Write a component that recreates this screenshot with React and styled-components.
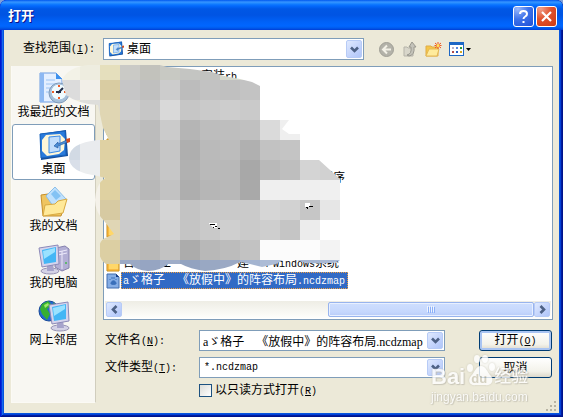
import React from "react";
import styled, { createGlobalStyle } from "styled-components";

const GlobalStyle = createGlobalStyle`
  * { box-sizing: border-box; }
  body { margin: 0; background: #7f9fd8; }
  body, button, input, select {
    font-family: "Liberation Serif", "Noto Sans CJK SC", sans-serif;
    font-size: 12px;
    line-height: 16px;
    text-spacing-trim: space-all;
    color: #000;
  }
  button { padding: 0; cursor: default; }
  svg { display: block; flex: none; }
`;

const Dialog = styled.main`
  position: relative;
  display: flex;
  flex-direction: column;
  min-height: 100vh;
  padding: 0 4px 4px;
  border-radius: 7px 7px 0 0;
  background: #0855dd;
  box-shadow: inset 1px 0 #0019cf, inset -1px 0 #00138c, inset 0 -1px #00138c,
    inset 2px 0 #0831d9, inset -2px -2px #001da0, inset 3px 0 #166aee, inset -3px -3px #0441d8;
  overflow: hidden;
`;

const TitleBar = styled.header`
  display: flex;
  align-items: center;
  gap: 2px;
  height: 30px;
  margin: 0 -4px;
  padding: 2px 6px 0 8px;
  background: linear-gradient(#0058ee 0, #3593ff 2px, #288eff 3px, #127dff 4px, #0369fc 6px, #0057e5 9px, #0054e3 15px, #0062f8 22px, #0066ff 26px, #005bec 28px, #003dd7 30px);
`;

const Title = styled.h1`
  flex: 1;
  margin: 0;
  font-size: 13px;
  line-height: 18px;
  font-weight: 700;
  color: #fff;
  text-shadow: 1px 1px #0f1089;
`;

const CaptionButton = styled.button`
  display: grid;
  place-items: center;
  width: 21px;
  height: 21px;
  border: 1px solid #fff;
  border-radius: 3px;
  background: ${(p) =>
    p.$close
      ? "radial-gradient(circle at 20% 10%, #f0a08a, #e0512c 45%, #cc3a12)"
      : "radial-gradient(circle at 20% 10%, #9ab8fb, #3f73ea 45%, #1c4fd6)"};
`;

const Body = styled.div`
  flex: 1;
  display: flex;
  flex-direction: column;
  gap: 6px;
  padding: 8px 6px 10px 7px;
  background: #ece9d8;
`;

const LookRow = styled.div`
  display: flex;
  align-items: center;
`;

const Label = styled.label`
  width: ${(p) => p.$width}px;
  padding-left: ${(p) => p.$indent || 0}px;
  white-space: nowrap;
`;

const Half = styled.span`
  font-family: "Liberation Mono", monospace;
  font-size: 10px;
`;

const Combo = styled.div`
  display: flex;
  align-items: center;
  width: ${(p) => p.$width};
  height: ${(p) => p.$height}px;
  padding: 1px;
  border: 1px solid #7f9db9;
  background: #fff;
`;

const Select = styled.select`
  flex: 1;
  min-width: 0;
  height: 18px;
  padding: 0 3px;
  border: 0;
  outline: 0;
  appearance: none;
  background: transparent;
  ${(p) => p.$mono && `font-family: "Liberation Mono", monospace; font-size: 10px;`}
`;

const TextInput = styled.input`
  flex: 1;
  min-width: 0;
  height: 18px;
  padding: 0 2px;
  border: 0;
  outline: 0;
  background: transparent;
`;

const ArrowButton = styled.button`
  display: grid;
  place-items: center;
  width: 16px;
  height: ${(p) => (p.$square ? "15px" : "100%")};
  border: 1px solid #b7cbf6;
  border-radius: 2px;
  background: linear-gradient(135deg, #dfe9fe, #bdcffb 70%, #b0c6f8);
`;

const Tools = styled.div`
  display: flex;
  align-items: center;
  gap: 7px;
  margin-left: 14px;
`;

const ToolButton = styled.button`
  display: flex;
  align-items: center;
  gap: 1px;
  border: 0;
  background: none;
`;

const Content = styled.div`
  flex: 1;
  display: flex;
  gap: 7px;
`;

const Places = styled.nav`
  display: flex;
  flex-direction: column;
  gap: 1px;
  width: 85px;
  padding: 1px 0;
  border: 1px solid #fbfaf5;
  border-top: 0;
  border-right-color: #d0cdbd;
  background: #f8f7f2;
`;

const Place = styled.button`
  display: flex;
  flex-direction: column;
  align-items: center;
  height: 56px;
  padding-top: 4px;
  border: 1px solid ${(p) => (p.$active ? "#7f9db9" : "transparent")};
  border-radius: 3px;
  background: ${(p) => (p.$active ? "#fff" : "transparent")};
  white-space: nowrap;
`;

const Right = styled.div`
  flex: 1;
  min-width: 0;
  display: flex;
  flex-direction: column;
  gap: 10px;
`;

const FileBox = styled.section`
  flex: 1;
  display: flex;
  flex-direction: column;
  padding: 1px;
  border: 1px solid #7f9db9;
  background: #fff;
`;

const FileList = styled.ul`
  flex: 1;
  margin: 0;
  padding: 0;
  list-style: none;
`;

const FileItem = styled.li`
  display: flex;
  align-items: center;
  height: 17px;
  padding-left: 1px;
  gap: 1px;
`;

const FileName = styled.button`
  height: 17px;
  padding: 0 2px 0 1px;
  border: 1px ${(p) => (p.$selected ? "dotted #f0a040" : "solid transparent")};
  background: ${(p) => (p.$selected ? "#316ac5" : "transparent")};
  color: ${(p) => (p.$selected ? "#fff" : "#000")};
  line-height: 15px;
  white-space: pre;
`;

const ScrollBar = styled.div`
  display: flex;
  align-items: center;
  height: 17px;
  padding: 0 1px;
  background: linear-gradient(#eeede5, #fefefb);
`;

const Track = styled.div`
  flex: 1;
  display: flex;
  justify-content: flex-end;
  height: 15px;
`;

const Thumb = styled.div`
  display: grid;
  place-items: center;
  width: 50%;
  border: 1px solid #98b4ee;
  border-radius: 2px;
  box-shadow: inset 0 0 0 1px #e8f0ff;
  background: linear-gradient(#cfdffe, #c5d7fd 70%, #b7cbf8);
`;

const Form = styled.form`
  display: grid;
  grid-template-columns: 96px 246px 1fr;
  row-gap: 6px;
  align-items: center;
  padding: 0 1px 6px 0;
`;

const PushButton = styled.button`
  justify-self: end;
  width: 73px;
  height: 21px;
  border: 1px solid #003c74;
  border-radius: 3px;
  background: linear-gradient(#fff, #f3f2ea 70%, #dcd8cb);
  box-shadow: ${(p) => (p.$primary ? "inset 0 0 0 2px #a9c4f2" : "none")};
`;

const CheckLabel = styled.label`
  grid-column: 2;
  display: flex;
  align-items: center;
  gap: 3px;
  height: 13px;
`;

const CheckBox = styled.input`
  appearance: none;
  width: 13px;
  height: 13px;
  margin: 0;
  border: 1px solid #1c5180;
  background: linear-gradient(135deg, #dcdcd7, #fff);
`;

const Overlay = styled.svg`
  position: absolute;
  left: 0;
  top: 0;
  pointer-events: none;
`;

const Grip = styled.svg`
  position: absolute;
  right: 6px;
  bottom: 5px;
`;

const Watermark = styled.div`
  position: absolute;
  right: 28px;
  bottom: 13px;
  width: 104px;
  opacity: 0.8;
  color: #fff;
  pointer-events: none;
  text-shadow: 0 0 2px #b5b2a5, 1px 1px 1px #c5c2b5;
`;

const Brand = styled.div`
  display: flex;
  align-items: flex-end;
  font: 700 22px/22px "Liberation Sans", "Noto Sans CJK SC", sans-serif;
`;

const BrandInner = styled.span`
  position: relative;
  width: 28px;
  color: #d0ccbc;
  font-size: 13px;
  line-height: 19px;
  text-align: center;
  text-shadow: none;
`;

const BrandCn = styled.span`
  margin-left: 1px;
  font-size: 17px;
  line-height: 22px;
  font-weight: 500;
`;

const Site = styled.div`
  margin-top: 2px;
  font: 12px/14px "Liberation Sans", sans-serif;
`;

const Paw = styled.svg`
  position: absolute;
  left: 35px;
  top: -12px;
  filter: drop-shadow(0 0 1px #c5c2b5);
`;

const Access = ({ letter, colon = true }) => (
  <Half>(<u>{letter}</u>){colon ? ":" : ""}</Half>
);

const Chevron = ({ rotate = 0 }) => (
  <svg width="9" height="9" viewBox="0 0 9 9">
    <path d="M1 2.5 4.5 6 8 2.5" transform={`rotate(${rotate} 4.5 4.5)`} fill="none" stroke="#4d6185" strokeWidth="2.6" />
  </svg>
);

const DesktopIcon = ({ size }) => (
  <svg width={size} height={size} viewBox="0 0 32 32">
    <path d="M2 5 28 1 30 27 3 31Z" fill="#174f9c" />
    <path d="M2 5 27 2 28 26 3 29Z" fill="#2a7bdc" stroke="#1863bd" />
    <path d="M8 6 22 5 27 10 26 21 21 25 9 27 4 22 4 11Z" fill="#fff7d8" />
    <path d="M11 8 22 7 22 22 11 24Z" fill="#c2defc" stroke="#3d8ce8" />
    <path d="M16 17 20 13 20 15 29 11 30 13 20 17 20 19Z" fill="#4b8ed5" stroke="#1c529c" strokeWidth=".6" />
    <path d="M28 10 32 9 32 13 29 14Z" fill="#d34a1d" />
  </svg>
);

const RecentIcon = () => (
  <svg width="32" height="32" viewBox="0 0 32 32">
    <path d="M2 1h16l6 6v23H2Z" fill="#e4efff" stroke="#6d9ce2" />
    <path d="M2 1h4v29H2Z" fill="#8db8f2" />
    <path d="M18 1v6h6" fill="#3d91ee" />
    <path d="M8 8h9M8 12h13M8 16h13M8 20h8" stroke="#9cc4f4" />
    <circle cx="21" cy="21" r="10" fill="#a5bfd9" stroke="#7f9ab9" />
    <circle cx="21" cy="20" r="8" fill="#f0fbff" stroke="#a5c2de" />
    <path d="M20 21 25 16M18 20h5" stroke="#222e48" strokeWidth="2" />
    <path d="M21 13v2M21 25v2M14 20h2M26 20h2" stroke="#ef5c24" strokeWidth="2" />
  </svg>
);

const DocumentsIcon = () => (
  <svg width="32" height="32" viewBox="0 0 32 32">
    <path d="M3 9 10 8 12 11 28 14 23 30 5 30Z" fill="#efc561" stroke="#c58f2d" />
    <path d="M8 10 17 1 28 13 18 24Z" fill="#c0e1fd" stroke="#8bbfe9" />
    <path d="M13 8 17 4 23 10 18 14Z" fill="#83c2f4" />
    <path d="M5 30 7 19 17 18 20 15 29 13 25 27Z" fill="#ffe999" stroke="#d9aa42" />
  </svg>
);

const Screen = ({ x, y }) => (
  <g transform={`translate(${x} ${y})`}>
    <ellipse cx="11" cy="26" rx="9" ry="3" fill="#d4d2e6" stroke="#9793b5" />
    <path d="M8 19 14 18 15 26 8 26Z" fill="#a6a3cb" />
    <path d="M0 3 19 0 20 19 3 22Z" fill="#d5d4ed" stroke="#8d8ab8" />
    <path d="M3 5 17 2 17 17 5 19Z" fill="#44b6f5" />
    <path d="M4 6 16 3 16 7 5 14Z" fill="#9be2ff" />
  </g>
);

const ComputerIcon = () => (
  <svg width="32" height="32" viewBox="0 0 32 32">
    <path d="M18 5 27 3 31 6 31 25 24 28 17 24Z" fill="#b3afd5" stroke="#8580ad" />
    <path d="M24 8v18M20 9l9-2M20 12l9-2" stroke="#ece9fa" />
    <circle cx="28" cy="20" r="1" fill="#45ba4c" />
    <Screen x={1} y={2} />
  </svg>
);

const NetworkIcon = () => (
  <svg width="32" height="32" viewBox="0 0 32 32">
    <circle cx="11" cy="11" r="10" fill="#2269d2" stroke="#164899" />
    <path d="M4 4 10 1 14 5 9 9 12 14 9 20 4 14 2 9ZM15 2 20 7 17 9Z" fill="#36af32" />
    <path d="M6 5 10 3 11 5 7 8Z" fill="#9fec65" />
    <Screen x={11} y={2} />
  </svg>
);

const FileGlyph = ({ kind }) =>
  kind === "map" ? (
    <svg width="14" height="16" viewBox="0 0 14 16">
      <path d="M1 1h9l3 3v11H1Z" fill="#85ade5" stroke="#416dae" />
      <path d="M10 1v3h3" fill="#173b84" />
      <path d="M4 6v1M6 4v2M8 4v2M10 6v1M5 10c1-3 4-3 5 0 1 2-6 2-5 0" fill="#396fba" stroke="#396fba" />
    </svg>
  ) : (
    <svg width="14" height="16" viewBox="0 0 14 16">
      <path d="M1 2h5l2 2h5v11H1Z" fill="#ffd768" stroke="#c58a16" />
      <path d="M2 3v11h11" fill="none" stroke="#ef9f23" />
    </svg>
  );

const cellRows = [
  [60, ["#f3f2e7", "#eeede0", "#e5dfbd", "#cacac6", "#c2c2bc", "#c8c9c3", "#c4c5c2", "#c2c3c0", "#d5d8cc", "#d5d8cc"]],
  [80, ["#dcdcdc", "#f2efe8", "#d9cca2", "#c6c6c7", "#c0c0bf", "#cccccc", "#bcbcbc", "#c2c2c2", "#c0c0c0", "#c3c3c3"]],
  [100, ["#ece9d8", "#dededb", "#e0d6b3", "#cdcdcd", "#c6c6c6", "#d9d9d9", "#c6c6c6", "#cacaca", "#cdcdcd", "#cacaca"]],
  [120, ["#ece9d8", "#ece9d8", "#dfd5b1", "#c2c2c2", "#bcbcbc", "#cbcbcb", "#b5b5b5", "#bdbdbd", "#bebebe", "#c0c0c0", "#dadada", "#efefef"]],
  [140, ["#d2dae4", "#e9ebee", "#dfd1a3", "#c4c4c4", "#bababa", "#c6c6c6", "#afafaf", "#bababa", "#bcbcbc", "#b0b0b0", "#c2c2c2", "#c4c4c4"]],
  [160, ["#d9dfe9", "#eceeef", "#dfd3a7", "#c4c4c4", "#bbbbbb", "#c6c6c6", "#b1b1b1", "#b9b9b9", "#b8b8b8", "#a8a8a8", "#b9b9b9", "#bebebe", "#d4d4d4", "#d1d1d1"]],
  [180, ["#f4f1e9", "#f4f1e9", "#dfd1a1", "#c2c2c2", "#b8b8b8", "#c2c2c2", "#aeaeae", "#b6b6b6", "#b8b8b8", "#a9a9a9", "#efefef", "#efefef", "#efefef", "#f0f0f0"]],
  [200, ["#f4f1e9", "#f4f1e9", "#d7caa2", "#cdcdcd", "#c6c6c6", "#d4d4d4", "#c3c3c3", "#c9c9c9", "#c9c9c9", "#cacaca", "#d6d6d6", "#d2d2d2", "#c6c6c6", "#e6e6e6"]],
  [220, ["#f4f1e9", "#ece9d8", "#e0d6b5", "#cbcbcb", "#c6c6c6", "#d2d2d2", "#c4c4c4", "#c9c9c9", "#cfcfcf", "#cacaca", "#cecece", "#c5c5c5", "#ececec", "#ffffff"]],
  [240, ["#f4f1e9", "#ece9d8", "#dccfa3", "#bebebe", "#b8b8b8", "#c2c2c2", "#acacac", "#b8b8b8", "#bcbcbc", "#c2c2c2", "#fbfbfb", "#fbfbfb", "#fcfcfc", "#f3f3f3"]],
  [260, ["#f4f1e9", "#ece9d8", "#d8cda5", "#9ba9c4", "#96a5c2", "#9fadc8", "#93a3c0", "#99a8c3", "#9ba9c4", "#a4b4d0", "#adbcd6", "#b5c2da", "#a5b5d2", "#a9b9d5"]],
];

const Mosaic = () => (
  <Overlay width="345" height="275" viewBox="0 0 345 275" shapeRendering="crispEdges">
    <clipPath id="smudge">
      <path d="M62 80Q68 67 88 65H160L167 67 190 69 212 72 224 76 240 79 252 82 260 86V120H289L282 129 289 134H300V160H319L340 179V260Q335 264 320 263 305 264 297 260H283L276 264 262 267 250 264 240 262Q225 270 205 271 190 269 181 264H168Q160 271 148 271 136 270 130 264H106Q99 260 99 249 99 241 105 238L114 234 105 222Q95 212 95 200 96 184 105 178L98 176Q69 172 69 158 69 143 98 140H109L103 128 98 105Q78 104 66 95Z" />
    </clipPath>
    <g clipPath="url(#smudge)">
      {cellRows.map(([y, colors]) =>
        colors.map((color, i) => <rect key={`${y}-${i}`} x={60 + i * 20} y={y} width="20" height="20" fill={color} />)
      )}
    </g>
    <path d="M209 223H217V228H213ZM305 203H310V207H305Z" fill="#fff" />
    <path d="M210 224.500h5M213 227.500h1M215 226.500h2M218 228.500h2M306 207.500h2M309 206.500h4M307 208.500h1" stroke="#000" />
  </Overlay>
);

const places = [
  ["我最近的文档", <RecentIcon />],
  ["桌面", <DesktopIcon size={32} />],
  ["我的文档", <DocumentsIcon />],
  ["我的电脑", <ComputerIcon />],
  ["网上邻居", <NetworkIcon />],
];

const blank = (n) => "\u3000".repeat(n);
const fileName = "aゞ格子　《放假中》的阵容布局.ncdzmap";
const files = [
  { name: blank(6) + "  安装", tail: "rb" },
  ...Array.from({ length: 5 }, () => ({ name: "" })),
  { name: blank(16) + "  程序" },
  ...Array.from({ length: 4 }, () => ({ name: "" })),
  { name: "台" + blank(2) + "立" + blank(5) + "  建一个", tail: "windows", end: "系统" },
  { lead: "a", name: "ゞ格子　《放假中》的阵容布局", tail: ".ncdzmap", kind: "map", selected: true },
];

export default function App() {
  return (
    <>
      <GlobalStyle />
      <Dialog>
        <TitleBar>
          <Title>打开</Title>
          <CaptionButton aria-label="帮助">
            <svg width="13" height="15" viewBox="0 0 13 15">
              <path d="M3 5C3 1 10 1 10 5 10 8 6.500 7 6.500 10M6.500 12v2" fill="none" stroke="#fff" strokeWidth="2" />
            </svg>
          </CaptionButton>
          <CaptionButton $close aria-label="关闭">
            <svg width="13" height="13" viewBox="0 0 13 13">
              <path d="m2 2 9 9m0-9-9 9" stroke="#fff" strokeWidth="2.200" />
            </svg>
          </CaptionButton>
        </TitleBar>
        <Body>
          <LookRow>
            <Label htmlFor="look" $width={92} $indent={12}>查找范围<Access letter="I" /></Label>
            <Combo $width="261px" $height={22}>
              <svg width="3" height="1" />
              <DesktopIcon size={16} />
              <Select id="look"><option>桌面</option></Select>
              <ArrowButton tabIndex={-1} aria-label="展开"><Chevron /></ArrowButton>
            </Combo>
            <Tools>
              <ToolButton aria-label="后退">
                <svg width="17" height="17" viewBox="0 0 17 17">
                  <circle cx="8.500" cy="8.500" r="7" fill="#b3b2a9" stroke="#a09f96" />
                  <path d="M13 8.500H5M9 4.500 5 8.500 9 12.500" fill="none" stroke="#f3f1e7" strokeWidth="2" />
                </svg>
              </ToolButton>
              <ToolButton aria-label="向上">
                <svg width="16" height="17" viewBox="0 0 16 17">
                  <path d="M2 6h3l1 1h5v8H2Z" fill="#d8d6ca" stroke="#b5b3a9" />
                  <path d="M5 14Q10 13 9 6H7L10 1 14 6H12Q13 14 7 15Z" fill="#c4c3ba" stroke="#9a9990" />
                </svg>
              </ToolButton>
              <ToolButton aria-label="新建文件夹">
                <svg width="17" height="17" viewBox="0 0 17 17">
                  <path d="M1 5h5l1 1h6v9H1Z" fill="#f5c648" stroke="#dfab49" />
                  <path d="M4 8h10l-2 7H1Z" fill="#ffeb9c" stroke="#e4b854" />
                  <path d="M13 1v7M10 2l6 5M16 2l-6 5M9.500 4.500h7" stroke="#ef5520" />
                  <circle cx="13" cy="4.500" r="1.500" fill="#ffe45b" />
                </svg>
              </ToolButton>
              <ToolButton aria-label="查看">
                <svg width="16" height="15" viewBox="0 0 16 15" shapeRendering="crispEdges">
                  <path d="M0 0h15v14H0Z" fill="#1d67c5" />
                  <path d="M1 3h13v10H1Z" fill="#fff" />
                  <path d="M3 5h2v2H3Z" fill="#b9b3c9" />
                  <path d="M7 5h2v2H7Z" fill="#5788de" />
                  <path d="M11 5h2v2h-2Z" fill="#289637" />
                  <path d="M3 9h2v2H3Z" fill="#b24b4b" />
                  <path d="M7 9h2v2H7Z" fill="#235bc2" />
                  <path d="M11 9h2v2h-2Z" fill="#d5a925" />
                </svg>
                <svg width="5" height="3" viewBox="0 0 5 3"><path d="M0 0h5L2.500 3Z" /></svg>
              </ToolButton>
            </Tools>
          </LookRow>
          <Content>
            <Places>
              {places.map(([name, icon]) => (
                <Place key={name} $active={name === "桌面"}>{icon}{name}</Place>
              ))}
            </Places>
            <Right>
              <FileBox>
                <FileList>
                  {files.map((file, i) => (
                    <FileItem key={i}>
                      <FileGlyph kind={file.kind} />
                      {file.name && (
                        <FileName $selected={file.selected}>
                          {file.lead && <Half>{file.lead}</Half>}{file.name}{file.tail && <Half>{file.tail}</Half>}{file.end}
                        </FileName>
                      )}
                    </FileItem>
                  ))}
                </FileList>
                <ScrollBar>
                  <ArrowButton $square aria-label="向左滚动"><Chevron rotate={90} /></ArrowButton>
                  <Track>
                    <Thumb>
                      <svg width="8" height="7" viewBox="0 0 8 7">
                        <path d="M.5 0v6M2.500 0v6M4.500 0v6M6.500 0v6" stroke="#eef4fe" />
                        <path d="M1.500 1v6M3.500 1v6M5.500 1v6M7.500 1v6" stroke="#8cb0f8" />
                      </svg>
                    </Thumb>
                  </Track>
                  <ArrowButton $square aria-label="向右滚动"><Chevron rotate={-90} /></ArrowButton>
                </ScrollBar>
              </FileBox>
              <Form onSubmit={(e) => e.preventDefault()}>
                <Label htmlFor="file-name" $width={96} $indent={2}>文件名<Access letter="N" /></Label>
                <Combo $width="100%" $height={21}>
                  <TextInput id="file-name" defaultValue={fileName} />
                  <ArrowButton type="button" aria-label="展开"><Chevron /></ArrowButton>
                </Combo>
                <PushButton $primary type="submit">打开<Access letter="O" colon={false} /></PushButton>
                <Label htmlFor="file-type" $width={96} $indent={2}>文件类型<Access letter="T" /></Label>
                <Combo $width="100%" $height={21}>
                  <Select id="file-type" $mono><option>*.ncdzmap</option></Select>
                  <ArrowButton type="button" tabIndex={-1} aria-label="展开"><Chevron /></ArrowButton>
                </Combo>
                <PushButton type="button">取消</PushButton>
                <CheckLabel>
                  <CheckBox type="checkbox" />
                  <span>以只读方式打开<Access letter="R" colon={false} /></span>
                </CheckLabel>
              </Form>
            </Right>
          </Content>
        </Body>
        <Mosaic />
        <Watermark>
          <Paw width="30" height="32" viewBox="0 0 30 32" fill="#fff">
            <ellipse cx="4" cy="14" rx="3" ry="4" />
            <ellipse cx="11" cy="5" rx="3" ry="4" />
            <ellipse cx="19" cy="5" rx="3" ry="4" />
            <ellipse cx="26" cy="13" rx="3" ry="4" />
            <path d="M15 12C20 12 21 18 25 22 29 28 24 32 19 31H10C4 32 1 27 5 22 9 18 10 12 15 12Z" />
          </Paw>
          <Brand>Bai<BrandInner>du</BrandInner><BrandCn>经验</BrandCn></Brand>
          <Site>jingyan.baidu.com</Site>
        </Watermark>
        <Grip width="12" height="12" viewBox="0 0 12 12">
          <path d="M9 1h2v2H9ZM5 5h2v2H5ZM9 5h2v2H9ZM1 9h2v2H1ZM5 9h2v2H5ZM9 9h2v2H9Z" fill="#b8b4a3" />
        </Grip>
      </Dialog>
    </>
  );
}
